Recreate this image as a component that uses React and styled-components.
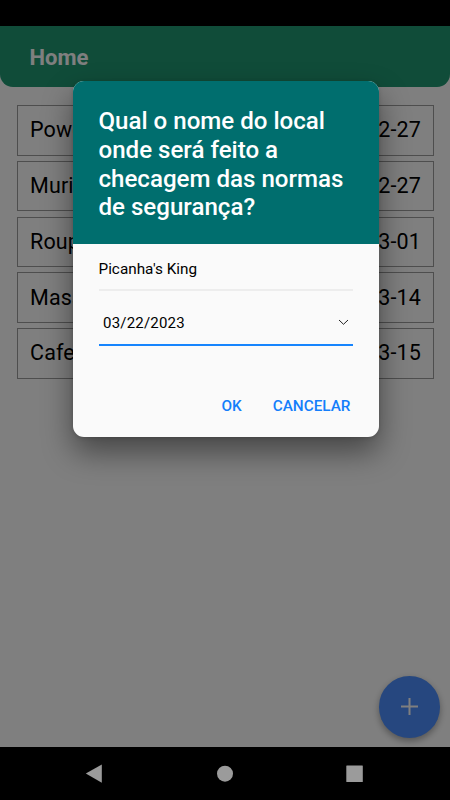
import React from 'react'
import styled, { createGlobalStyle } from 'styled-components'


const GlobalStyle = createGlobalStyle`
* { box-sizing: border-box; }
body {
  margin: 0;
  font-family: Roboto, "Liberation Sans", sans-serif;
  background: #000;
}
`

const Phone = styled.div`
position: relative;
width: 450px;
height: 800px;
overflow: hidden;
display: flex;
flex-direction: column;
background: #000;
padding-top: 26px;
`

const Screen = styled.div`
flex: 1;
background: #fff;
`

const Header = styled.header`
height: 61px;
padding: 1px 29.5px 0;
display: flex;
align-items: center;
background: #209873;
border-radius: 0 0 13px 13px;
`

const PageTitle = styled.h1`
margin: 0;
color: #fff;
font-size: 22px;
font-weight: 700;
`

const List = styled.ul`
list-style: none;
margin: 0;
padding: 18px 16.5px 0 17px;
display: flex;
flex-direction: column;
gap: 5.3px;
`

const ListRow = styled.li`
height: 50.5px;
padding: 0 11.5px 1px 12px;
display: flex;
align-items: center;
justify-content: space-between;
border: 1px solid #9c9c9c;
color: #000;
font-size: 21.5px;
letter-spacing: 0.15px;
`

const FloatingButton = styled.button`
position: absolute;
right: 10px;
bottom: 62.5px;
width: 61.5px;
height: 61.5px;
padding: 0;
display: flex;
align-items: center;
justify-content: center;
border: 0;
border-radius: 50%;
background: #4c8ffe;
box-shadow: 0 3px 7px rgba(0, 0, 0, 0.35);
`

const NavBar = styled.nav`
height: 53px;
display: flex;
align-items: center;
justify-content: center;
background: #000;
`

const Backdrop = styled.div`
position: absolute;
top: 26px;
right: 0;
bottom: 53px;
left: 0;
padding: 55px 71px 0 72.5px;
background: rgba(0, 0, 0, 0.5);
`

const Dialog = styled.section`
height: 356px;
overflow: hidden;
border-radius: 11px;
background: #fafafa;
box-shadow: 0 15px 31px rgba(0, 0, 0, 0.45), 0 1px 4px rgba(0, 0, 0, 0.15);
`

const DialogTitle = styled.h2`
height: 163px;
margin: 0;
padding: 26px 20px 0 26px;
color: #fff;
background: #006e6e;
font-size: 24.1px;
font-weight: 500;
line-height: 28.8px;
`

const Fields = styled.div`
padding: 0 26.5px 0 26px;
`

const Field = styled.div`
height: ${({ $focused }) => ($focused ? '55px' : '46.5px')};
padding: ${({ $focused }) => ($focused ? '11px 3.5px 0 4.5px' : '6px 0 0')};
display: flex;
align-items: center;
justify-content: space-between;
border-bottom: ${({ $focused }) => ($focused ? '2px solid #1684fd' : '2px solid #ededed')};
color: #000;
font-size: ${({ $focused }) => ($focused ? '15px' : '15.3px')};
letter-spacing: ${({ $focused }) => ($focused ? '0.2px' : '0')};
`

const Actions = styled.div`
padding: 51.5px 28.5px 0;
display: flex;
justify-content: flex-end;
gap: 31px;
`

const ActionButton = styled.button`
padding: 0;
border: 0;
background: none;
color: #147efb;
font-family: inherit;
font-size: 15.3px;
font-weight: 500;
`

const places = [
  { name: 'Power', date: '2023-02-27' },
  { name: 'Murilo', date: '2023-02-27' },
  { name: 'Roupas', date: '2023-03-01' },
  { name: 'Massas', date: '2023-03-14' },
  { name: 'Cafeteria', date: '2023-03-15' },
]

const NewPlaceDialog = () => {
  return (
    <Backdrop>
      <Dialog role="dialog">
        <DialogTitle>
          Qual o nome do local<br />
          onde será feito a<br />
          checagem das normas<br />
          de segurança?
        </DialogTitle>
        <Fields>
          <Field>Picanha's King</Field>
          <Field $focused>
            03/22/2023
            <svg width="11" height="7" viewBox="0 0 11 7" fill="none" stroke="#222" strokeWidth="1">
              <path d="M1 1l4.5 4.3L10 1" />
            </svg>
          </Field>
        </Fields>
        <Actions>
          <ActionButton>OK</ActionButton>
          <ActionButton>CANCELAR</ActionButton>
        </Actions>
      </Dialog>
    </Backdrop>
  )
}

const App = () => {
  return (
    <>
      <GlobalStyle />
      <Phone>
        <Screen>
          <Header>
            <PageTitle>Home</PageTitle>
          </Header>
          <List>
            {places.map(({ name, date }) => (
              <ListRow key={name}>
                <span>{name}</span>
                <span>{date}</span>
              </ListRow>
            ))}
          </List>
        </Screen>
        <NavBar>
          <svg width="450" height="53" viewBox="0 0 450 53" fill="#9b9b9b">
            <path d="M85.8 26.5L101.8 17.5V35.7Z" />
            <circle cx="225" cy="26.7" r="8" />
            <rect x="346.3" y="18.5" width="16.5" height="16.5" rx="0.5" />
          </svg>
        </NavBar>
        <FloatingButton aria-label="Adicionar">
          <svg width="17" height="17" viewBox="0 0 17 17" stroke="#fff" strokeWidth="2">
            <path d="M8.5 0V17M0 8.5H17" />
          </svg>
        </FloatingButton>
        <NewPlaceDialog />
      </Phone>
    </>
  )
}

export default App
